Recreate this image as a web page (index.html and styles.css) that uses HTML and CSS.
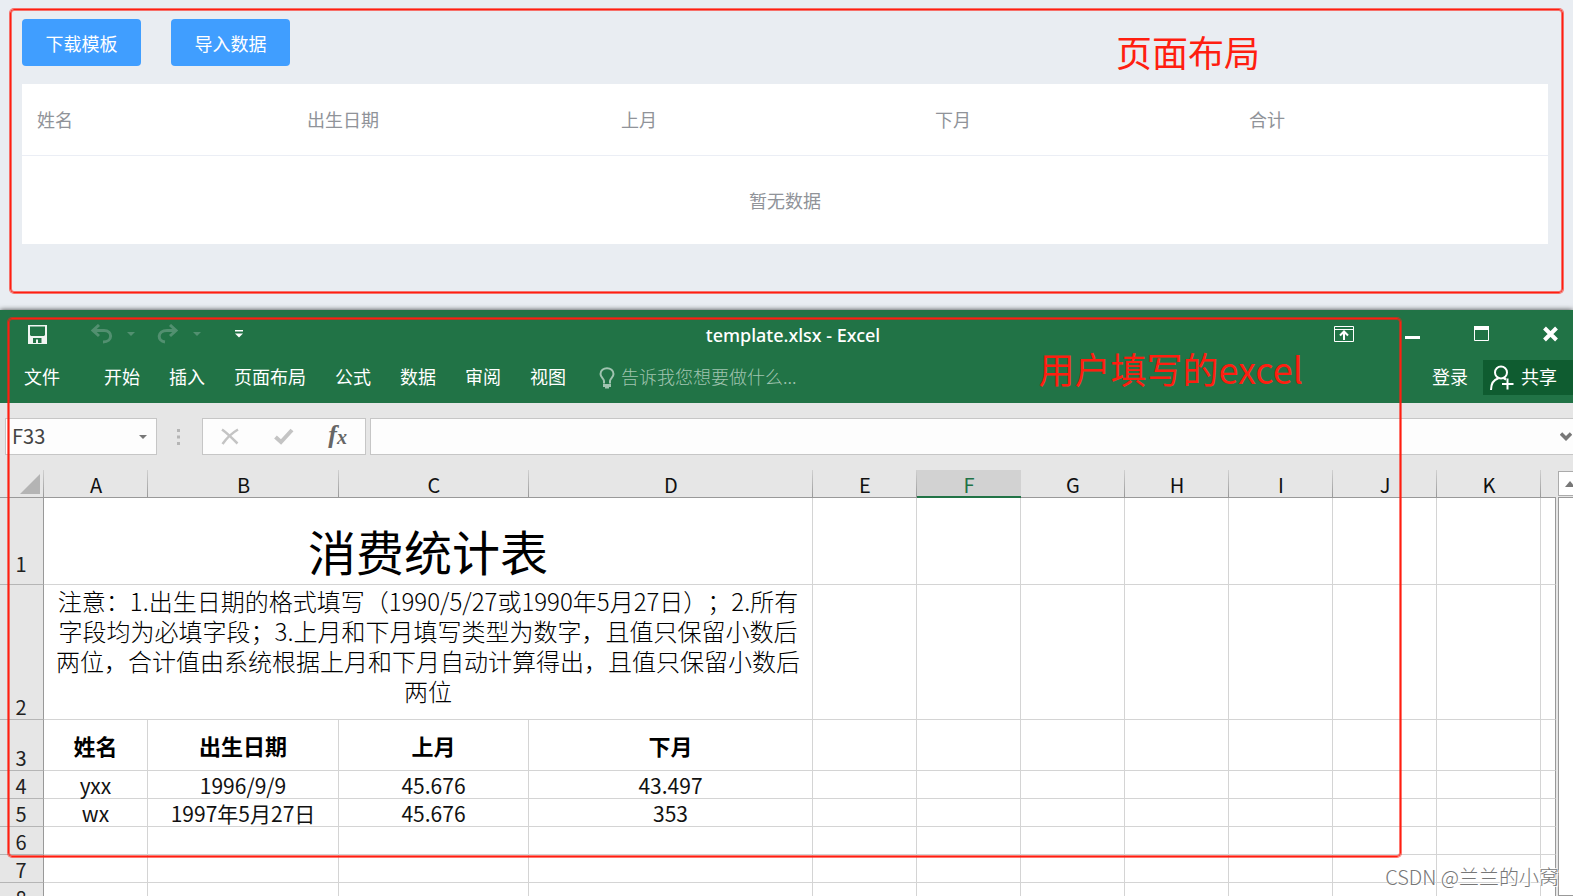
FILE: index.html
```html
<!DOCTYPE html>
<html lang="zh-CN">
<head>
<meta charset="utf-8">
<title>消费统计表</title>
<link rel="stylesheet" href="styles.css">
</head>
<body>
<section class="page">
  <div class="actions">
    <button class="btn" type="button">下载模板</button>
    <button class="btn" type="button">导入数据</button>
  </div>
  <table class="list">
    <colgroup><col class="list-first"><col><col><col><col></colgroup>
    <thead><tr><th>姓名</th><th>出生日期</th><th>上月</th><th>下月</th><th>合计</th></tr></thead>
    <tbody><tr><td colspan="5">暂无数据</td></tr></tbody>
  </table>
  <div class="frame frame-page"></div>
  <p class="note note-page">页面布局</p>
</section>

<main class="excel">
  <header class="titlebar">
    <div class="quick">
      <button class="icon save" type="button" aria-label="保存"><svg width="19" height="19" viewBox="0 0 19 19"><path fill="#f0f5f2" fill-rule="evenodd" d="M0 0H19V19H0ZM2 1.500V10L3 11H16L17 10V1.500ZM5 13V18H8V14.500H10V18H13.500V13Z"/></svg></button>
      <button class="icon undo" type="button" aria-label="撤销"><svg width="22" height="20" viewBox="0 0 22 20"><path fill="none" stroke="#529070" stroke-width="3" d="M8 1L2 6.500L8 12M2.500 6.500H13C22 6.500 22 18 12 18"/></svg></button>
      <button class="icon drop" type="button" aria-label="撤销列表"><svg width="8" height="4" viewBox="0 0 8 4"><path fill="#529070" d="M0 0H8L4 4Z"/></svg></button>
      <button class="icon redo" type="button" aria-label="恢复"><svg width="22" height="20" viewBox="0 0 22 20"><path fill="none" stroke="#529070" stroke-width="3" d="M13 1L19 6.500L13 12M19 6.500H10C0 6.500 0 17 8 18"/></svg></button>
      <button class="icon drop" type="button" aria-label="恢复列表"><svg width="8" height="4" viewBox="0 0 8 4"><path fill="#529070" d="M0 0H8L4 4Z"/></svg></button>
      <button class="icon custom" type="button" aria-label="自定义"><svg width="8" height="8" viewBox="0 0 8 8"><path fill="#fff" d="M0 0H8V1.500H0ZM0 3.500H8L4 7.500Z"/></svg></button>
    </div>
    <h1 class="doc">template.xlsx - Excel</h1>
    <div class="winctl">
      <button class="icon toggle" type="button" aria-label="功能区"><svg width="20" height="16" viewBox="0 0 20 16"><path fill="none" stroke="#fff" d="M.5.5H19.500V15.500H.5ZM0 3.500H20"/><path fill="none" stroke="#fff" stroke-width="2" d="M10 14V6M6 9.500L10 5.500L14 9.500"/></svg></button>
      <button class="icon" type="button" aria-label="最小化"><svg width="15" height="16" viewBox="0 0 15 16"><path fill="#fff" d="M0 10H15V13H0Z"/></svg></button>
      <button class="icon" type="button" aria-label="最大化"><svg width="15" height="16" viewBox="0 0 15 16"><path fill="none" stroke="#fff" d="M.5.5H14.500V14.500H.5Z"/><path fill="#fff" d="M0 0H15V4H0Z"/></svg></button>
      <button class="icon" type="button" aria-label="关闭"><svg width="15" height="16" viewBox="0 0 15 16"><path stroke="#fff" stroke-width="4" d="M1.500 2L13.500 14M13.500 2L1.500 14"/></svg></button>
    </div>
  </header>
  <nav class="ribbon">
    <button class="tab tab-file" type="button">文件</button>
    <button class="tab" type="button">开始</button>
    <button class="tab" type="button">插入</button>
    <button class="tab" type="button">页面布局</button>
    <button class="tab" type="button">公式</button>
    <button class="tab" type="button">数据</button>
    <button class="tab" type="button">审阅</button>
    <button class="tab" type="button">视图</button>
    <button class="tell" type="button"><svg width="16" height="22" viewBox="0 0 16 22"><path fill="none" stroke="#a0c4b0" stroke-width="2" d="M5 16.500V14C5 11.500 1.500 10.500 1.500 7C1.500 3.500 4.500 1.200 8 1.200S14.500 3.500 14.500 7C14.500 10.500 11 11.500 11 14V16.500"/><path fill="#a0c4b0" d="M4 17H12V20H10V21.500H6V20H4Z"/></svg><span class="label">告诉我您想要做什么...</span></button>
    <button class="tab login" type="button">登录</button>
    <button class="share" type="button"><svg width="24" height="25" viewBox="0 0 24 25"><g fill="none" stroke="#fff" stroke-width="2"><circle cx="11" cy="7.500" r="6"/><path d="M1 25C1 18.500 4 14.500 8.500 13.200M13.500 13.200L16 14.500M17.500 13.500V24.500M12 19H23.500"/></g></svg><span class="label">共享</span></button>
  </nav>
  <div class="formula">
    <div class="namebox"><input class="ref" aria-label="名称框" value="F33"><button class="icon" type="button" aria-label="展开"><svg width="8" height="4" viewBox="0 0 8 4"><path fill="#777" d="M0 0H8L4 4Z"/></svg></button></div>
    <svg class="grip" width="3" height="16" viewBox="0 0 3 16"><path fill="#b5b5b5" d="M0 0H3V3H0ZM0 6.500H3V9.500H0ZM0 13H3V16H0Z"/></svg>
    <div class="fxbox">
      <button class="icon" type="button" aria-label="取消"><svg width="18" height="17" viewBox="0 0 18 17"><path fill="none" stroke="#c4c4c4" stroke-width="2.500" d="M1 1.500C6 5 12 11 16.500 15.500M17 1.500C11 5 5 11 1.500 16"/></svg></button>
      <button class="icon" type="button" aria-label="输入"><svg width="20" height="17" viewBox="0 0 20 17"><path fill="none" stroke="#c4c4c4" stroke-width="4" d="M1.500 9L7 14L18 2"/></svg></button>
      <button class="icon fx" type="button" aria-label="插入函数"><i class="fx-f">f</i><i class="fx-x">x</i></button>
    </div>
    <div class="entry"><input class="entry-text" aria-label="编辑栏"><button class="icon" type="button" aria-label="展开编辑栏"><svg width="12" height="9" viewBox="0 0 12 9"><path fill="none" stroke="#777" stroke-width="3.500" d="M1 1.500L6 6.500L11 1.500"/></svg></button></div>
  </div>
  <div class="work">
    <div class="sheet">
      <table class="grid">
        <colgroup><col class="c-row"><col class="c-std"><col class="c-b"><col class="c-c"><col class="c-d"><col class="c-std"><col class="c-std"><col class="c-std"><col class="c-std"><col class="c-std"><col class="c-std"><col class="c-std"><col></colgroup>
        <thead><tr><th class="corner"><svg width="20" height="20" viewBox="0 0 20 20"><path fill="#b4b4b4" d="M20 0V20H0Z"/></svg></th><th>A</th><th>B</th><th>C</th><th>D</th><th>E</th><th class="active">F</th><th>G</th><th>H</th><th>I</th><th>J</th><th>K</th><th></th></tr></thead>
        <tbody>
          <tr class="r-title"><th>1</th><td colspan="4">消费统计表</td><td></td><td></td><td></td><td></td><td></td><td></td><td></td><td></td></tr>
          <tr class="r-tips"><th>2</th><td colspan="4">注意：1.出生日期的格式填写（1990/5/27或1990年5月27日）；2.所有<br>字段均为必填字段；3.上月和下月填写类型为数字，且值只保留小数后<br>两位，合计值由系统根据上月和下月自动计算得出，且值只保留小数后<br>两位</td><td></td><td></td><td></td><td></td><td></td><td></td><td></td><td></td></tr>
          <tr class="r-head"><th>3</th><td>姓名</td><td>出生日期</td><td>上月</td><td>下月</td><td></td><td></td><td></td><td></td><td></td><td></td><td></td><td></td></tr>
          <tr><th>4</th><td>yxx</td><td>1996/9/9</td><td>45.676</td><td>43.497</td><td></td><td></td><td></td><td></td><td></td><td></td><td></td><td></td></tr>
          <tr><th>5</th><td>wx</td><td>1997年5月27日</td><td>45.676</td><td>353</td><td></td><td></td><td></td><td></td><td></td><td></td><td></td><td></td></tr>
          <tr><th>6</th><td></td><td></td><td></td><td></td><td></td><td></td><td></td><td></td><td></td><td></td><td></td><td></td></tr>
          <tr><th>7</th><td></td><td></td><td></td><td></td><td></td><td></td><td></td><td></td><td></td><td></td><td></td><td></td></tr>
          <tr><th>8</th><td></td><td></td><td></td><td></td><td></td><td></td><td></td><td></td><td></td><td></td><td></td><td></td></tr>
        </tbody>
      </table>
    </div>
    <div class="scroll">
      <button class="scroll-up" type="button" aria-label="向上滚动"><svg width="10" height="6" viewBox="0 0 10 6"><path fill="#777" d="M0 6L5 0L10 6Z"/></svg></button>
      <div class="thumb"></div>
    </div>
  </div>
  <div class="frame frame-excel"></div>
  <p class="note note-excel">用户填写的excel</p>
</main>
<p class="mark">CSDN @兰兰的小窝</p>
</body>
</html>
```
FILE: styles.css
```css
* { box-sizing: border-box; }
body {
  margin: 0;
  height: 100vh;
  display: flex;
  flex-direction: column;
  overflow: hidden;
  position: relative;
  background: #e9edf2;
  font-family: "Noto Sans CJK SC", "Noto Sans", sans-serif;
  font-size: 18px;
}
button, input { font: inherit; color: inherit; border: 0; padding: 0; margin: 0; background: none; }
p, h1 { margin: 0; }
svg { display: block; flex: none; }

/* upload page */
.page { position: relative; flex: none; padding: 19px 25px 66px 22px; }
.actions { display: flex; gap: 30px; margin-bottom: 18px; }
.btn { height: 47px; min-width: 119px; border-radius: 4px; background: #409eff; color: #fff; }
.list { width: 100%; table-layout: fixed; border-spacing: 0; background: #fff; color: #909399; }
.list-first { width: 270px; }
.list th { height: 72px; padding: 0 15px 2px; text-align: left; font-weight: 400; border-bottom: 1px solid #ebeef5; }
.list td { height: 88px; padding: 0; text-align: center; }

/* red callouts */
.frame {
  position: absolute;
  border: 1px solid #ff1e10;
  border-radius: 4px;
  box-shadow: 0 0 0 1px rgba(255, 30, 16, .6), inset 0 0 0 1px rgba(255, 30, 16, .6);
  pointer-events: none;
}
.frame-page { inset: 9px 10px 17px 10px; }
.frame-excel { top: 8px; left: 8px; right: 172px; height: 539px; }
.note { position: absolute; font-size: 36px; line-height: 48px; color: #ff1e10; }
.note-page { top: 27px; right: 313px; }
.note-excel { top: 34px; right: 270px; }

/* workbook window */
.excel { position: relative; flex: 1; min-height: 0; display: flex; flex-direction: column; background: #e6e6e6; box-shadow: 0 0 5px rgba(0, 0, 0, .75); }
.icon { display: flex; align-items: center; justify-content: center; }
.titlebar { flex: none; height: 48px; display: grid; grid-template-columns: 1fr auto 1fr; align-items: center; padding: 0 15px 0 28px; background: #217346; color: #fff; }
.quick { display: flex; align-items: center; }
.undo { margin-left: 44px; }
.drop { margin-left: 14px; }
.redo { margin-left: 22px; }
.custom { margin-left: 34px; }
.doc { padding-top: 2px; font: 500 18px/26px "Noto Sans", "Noto Sans CJK SC", sans-serif; }
.winctl { display: flex; justify-content: flex-end; gap: 54px; }
.toggle { margin-right: -3px; }
.ribbon { flex: none; height: 45px; padding: 2px 0 8px 24px; display: flex; align-items: center; gap: 29px; background: #217346; color: #fff; white-space: nowrap; }
.tab, .label { padding-bottom: 4px; }
.tab-file { margin-right: 15px; }
.tell { display: flex; align-items: center; gap: 6px; margin-left: 4px; color: #a0c4b0; font-weight: 300; }
.login { margin-left: auto; }
.share { height: 35px; padding: 0 16px 0 7px; margin-left: -14px; display: flex; align-items: center; gap: 7px; background: #0f5c30; }
.formula { flex: none; display: flex; align-items: center; padding: 15px 0 15px 5px; color: #444; }
.namebox, .fxbox, .entry { height: 37px; display: flex; align-items: center; background: #fdfdfd; border: 1px solid #c6c6c6; }
.namebox { width: 152px; padding: 0 9px 0 6px; }
.ref { flex: 1; min-width: 0; padding-bottom: 2px; font-size: 20px; }
.grip { margin: 0 22px 0 20px; }
.fxbox { width: 164px; padding: 0 18px; justify-content: space-between; margin-right: 4px; }
.fx { padding-bottom: 4px; color: #666; font-family: "Liberation Serif", serif; line-height: 24px; }
.fx-f { font-size: 26px; font-weight: 700; }
.fx-x { font-size: 20px; font-weight: 700; padding-top: 4px; }
.entry { flex: 1; border-right: 0; padding-right: 1px; }
.entry-text { flex: 1; min-width: 0; height: 100%; }

.work { flex: 1; min-height: 0; display: flex; gap: 2px; }
.sheet { flex: 1; min-width: 0; overflow: hidden; }
.grid { width: 100%; table-layout: fixed; border-spacing: 0; font-size: 21px; line-height: 25px; color: #111; }
.c-row { width: 44px; }
.c-std { width: 104px; }
.c-b { width: 191px; }
.c-c { width: 190px; }
.c-d { width: 284px; }
.grid th, .grid td { padding: 0; height: 28px; border-right: 1px solid #d4d4d4; border-bottom: 1px solid #d4d4d4; text-align: center; vertical-align: bottom; font-weight: 400; }
.grid td { background: #fff; }
.grid td:last-child { border-right-color: #999; }
.grid thead th { font-size: 20px; line-height: 24px; border-right: 0; border-bottom-color: #999; background: linear-gradient(#d0d0d0, #999) right / 1px 100% no-repeat; }
.grid thead th:last-child { background: none; }
.grid thead .corner svg { margin: 0 4px 3px 20px; }
.grid thead .active { color: #217346; background: #d2d2d2; border-bottom: 2px solid #217346; line-height: 22px; }
.grid tbody th { font-size: 20px; border-right-color: #999; border-bottom-color: #b5b5b5; color: #222; padding-right: 1px; }
.grid .r-title td { height: 87px; font-size: 48px; line-height: 68px; color: #000; }
.grid .r-title th { padding-bottom: 8px; }
.grid .r-tips td { height: 135px; font-size: 24px; line-height: 30px; font-weight: 300; color: #000; vertical-align: top; padding-top: 1px; white-space: nowrap; text-spacing-trim: space-all; }
.grid .r-head td { height: 51px; font-size: 22px; font-weight: 700; color: #000; vertical-align: middle; }
.scroll { flex: none; width: 15px; display: flex; flex-direction: column; gap: 1px; padding-top: 1px; }
.scroll-up { height: 25px; padding-left: 6px; border: 1px solid #ababab; border-right: 0; background: #fff; overflow: hidden; }
.thumb { flex: 1; border: 1px solid #999; border-right: 0; background: #fff; }
.mark { position: absolute; right: 14px; bottom: 4px; font-size: 20px; line-height: 30px; font-weight: 300; color: #777; text-shadow: 1px 1px 0 #fff, -1px -1px 0 #fff; }
```
